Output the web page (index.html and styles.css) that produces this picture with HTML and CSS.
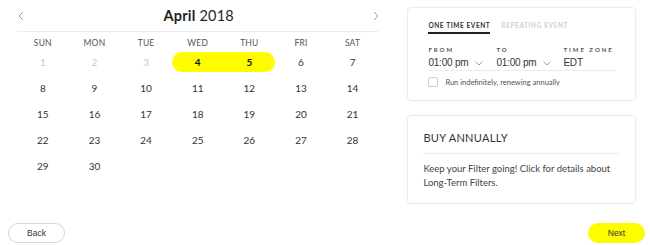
FILE: index.html
```html
<!DOCTYPE html>
<html>
<head>
<meta charset="utf-8">
<link rel="stylesheet" href="styles.css">
</head>
<body>
<div class="page">
  <div class="main">
    <section class="calendar">
      <div class="cal-head">
        <svg class="chev" width="8" height="10" viewBox="0 0 8 10"><path d="M6 1 L2 5 L6 9" fill="none" stroke="#9a9a9a" stroke-width="1"/></svg>
        <div class="title"><b>April</b> 2018</div>
        <svg class="chev" width="8" height="10" viewBox="0 0 8 10"><path d="M2 1 L6 5 L2 9" fill="none" stroke="#9a9a9a" stroke-width="1"/></svg>
      </div>
      <div class="grid dow">
        <span>SUN</span><span>MON</span><span>TUE</span><span>WED</span><span>THU</span><span>FRI</span><span>SAT</span>
      </div>
      <div class="grid days">
        <span class="off">1</span><span class="off">2</span><span class="off">3</span>
        <span class="sel first"><i>4</i></span><span class="sel last"><i>5</i></span><span>6</span><span>7</span>
        <span>8</span><span>9</span><span>10</span><span>11</span><span>12</span><span>13</span><span>14</span>
        <span>15</span><span>16</span><span>17</span><span>18</span><span>19</span><span>20</span><span>21</span>
        <span>22</span><span>23</span><span>24</span><span>25</span><span>26</span><span>27</span><span>28</span>
        <span>29</span><span>30</span>
      </div>
    </section>
    <aside class="side">
      <div class="card event">
        <div class="tabs">
          <span class="tab active">ONE TIME EVENT</span>
          <span class="tab">REPEATING EVENT</span>
        </div>
        <div class="fields">
          <div class="field f1">
            <div class="label">FROM</div>
            <div class="value">01:00 pm <svg width="8" height="5" viewBox="0 0 8 5"><path d="M0.5 0.5 L4 4 L7.5 0.5" fill="none" stroke="#a0a0a0" stroke-width="1"/></svg></div>
          </div>
          <div class="field f2">
            <div class="label">TO</div>
            <div class="value">01:00 pm <svg width="8" height="5" viewBox="0 0 8 5"><path d="M0.5 0.5 L4 4 L7.5 0.5" fill="none" stroke="#a0a0a0" stroke-width="1"/></svg></div>
          </div>
          <div class="field f3">
            <div class="label">TIME ZONE</div>
            <div class="value">EDT</div>
          </div>
        </div>
        <label class="check"><span class="box"></span>Run indefinitely, renewing annually</label>
      </div>
      <div class="card buy">
        <h2>BUY ANNUALLY</h2>
        <p>Keep your Filter going! Click for details about Long-Term Filters.</p>
      </div>
    </aside>
  </div>
  <footer class="footer">
    <button class="btn back">Back</button>
    <button class="btn next">Next</button>
  </footer>
</div>
</body>
</html>
```
FILE: styles.css
```css
* { box-sizing: border-box; }
html, body { margin: 0; padding: 0; background: #fff; }
body { font-family: Lato, "Open Sans", sans-serif; color: #333; }
.page { width: 650px; height: 245px; }
.main { display: flex; gap: 29px; padding: 0 14px 0 17px; }
.calendar { width: 362px; }
.cal-head {
  height: 32px;
  border-bottom: 1px solid #ececec;
  display: flex; align-items: center; justify-content: space-between;
}
.chev { display: block; margin-top: 1px; }
.cal-head .chev:last-child { margin-right: -2px; }
.title { font-size: 14.5px; color: #1f1f1f; letter-spacing: 0.2px; }
.title b { font-weight: 700; }
.grid { display: grid; grid-template-columns: repeat(7, 1fr); }
.dow { padding-top: 5px; }
.dow span { text-align: center; font-size: 8.5px; line-height: 12px; color: #555; letter-spacing: 0.2px; }
.days span { height: 26px; display: flex; align-items: center; justify-content: center; font-size: 10px; color: #333; }
.days span.off { color: #c8c8c8; }
.days span.sel i {
  font-style: normal; font-weight: 700; color: #111;
  width: 100%; height: 20px; display: flex; align-items: center; justify-content: center;
  background: #fffc00;
}
.days span.first i { border-radius: 10px 0 0 10px; }
.days span.last i { border-radius: 0 10px 10px 0; }

.side { width: 229px; padding-top: 7px; display: flex; flex-direction: column; gap: 14px; }
.card {
  border: 1px solid #ebebeb; border-radius: 4px;
  box-shadow: 0 0 2px rgba(0,0,0,0.04);
}
.event { height: 94px; padding: 13px 19px 0 20px; }
.tabs { display: flex; gap: 11px; }
.tab { font-size: 6.5px; line-height: 10px; letter-spacing: 0.6px; color: #cfcfcf; font-weight: 700; padding-bottom: 1px; border-bottom: 2px solid transparent; }
.tab.active { color: #333; border-bottom-color: #222; }
.fields { display: flex; margin-top: 12px; border-bottom: 1px solid #ececec; }
.field .label { font-size: 6px; line-height: 8px; letter-spacing: 2px; font-weight: 700; color: #555; }
.field .value { font-family: "Liberation Sans", Arial, sans-serif; font-size: 10px; letter-spacing: -0.2px; line-height: 14px; margin-top: 2px; color: #333; display: flex; align-items: center; }
.field .value svg { margin-left: 6px; margin-top: 1px; }
.f1 { width: 68px; }
.f2 { width: 67px; }
.check { display: flex; align-items: center; margin-top: 6px; font-size: 7.5px; color: #555; }
.box { width: 10px; height: 10px; border: 1px solid #cfcfcf; border-radius: 2px; margin-right: 7px; }

.buy { height: 89px; padding: 15px 15px 0 15px; }
.buy h2 { margin: 0; font-size: 11px; line-height: 14px; font-weight: 400; color: #333; letter-spacing: 0.3px; padding-bottom: 8px; border-bottom: 1px solid #ececec; }
.buy p { margin: 8px 0 0; font-size: 9.5px; line-height: 14px; color: #444; }

.footer { display: flex; justify-content: space-between; padding: 0 5px 0 8px; margin-top: 19px; }
.btn {
  width: 57px; height: 20px; border-radius: 10px; font-family: "Liberation Sans", Arial, sans-serif;
  font-size: 8.5px; color: #333; padding: 0; cursor: pointer;
}
.back { background: #fff; border: 1px solid #d8d8d8; }
.next { background: #fffc00; border: none; }
```
